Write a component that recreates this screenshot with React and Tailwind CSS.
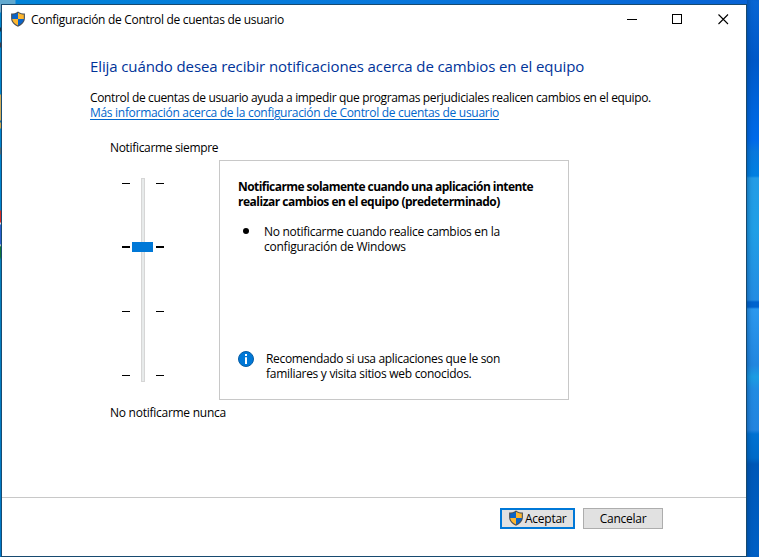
import React from 'react';

function Shield() {
  return (
    <svg width="16" height="16" viewBox="0 0 16 16" className="shrink-0">
      <path d="M8 .4C6 2 3.6 2.5 1.1 2.5v4.8C1.1 11 4 14 8 15.7c4-1.7 6.900-4.700 6.900-8.400V2.500C12.400 2.500 10 2 8 .4Z" fill="#4a4f55" />
      <path d="M8 1.800C6.300 3 4.300 3.500 2.200 3.600V8H8Z" fill="#0a64c8" />
      <path d="M8 1.800C9.700 3 11.700 3.500 13.800 3.600V8H8Z" fill="#fdb62f" />
      <path d="M2.200 8c.3 2.900 2.700 5.100 5.800 6.500V8Z" fill="#fdb62f" />
      <path d="M13.800 8c-.3 2.900-2.700 5.100-5.800 6.500V8Z" fill="#0a64c8" />
    </svg>
  );
}

function TitleBar() {
  return (
    <header className="flex h-[28px] items-center pl-2">
      <Shield />
      <h1 className="ml-[5px] tracking-[-0.3px]">Configuración de Control de cuentas de usuario</h1>
      <div className="ml-auto flex h-full">
        <button className="flex w-[45px] items-center justify-center pl-px" aria-label="Minimizar">
          <svg width="10" height="10" shapeRendering="crispEdges"><path d="M0 5h10v1H0Z" /></svg>
        </button>
        <button className="flex w-[46px] items-center justify-center" aria-label="Maximizar">
          <svg width="10" height="10" shapeRendering="crispEdges"><rect x=".5" y=".5" width="9" height="9" fill="none" stroke="#000" /></svg>
        </button>
        <button className="flex w-[46px] items-center justify-center" aria-label="Cerrar">
          <svg width="12" height="12"><path d="M1.500 1.500l9.500 9.500M11 1.500L1.500 11" stroke="#000" strokeWidth="1.100" /></svg>
        </button>
      </div>
    </header>
  );
}

const levels = [false, true, false, false];

function Ticks() {
  return (
    <div className="flex h-[193px] w-2 flex-col justify-between">
      {levels.map((active, i) => (
        <span key={i} className={active ? 'mt-[-1px] h-[2px] bg-black' : 'h-px bg-black'} />
      ))}
    </div>
  );
}

function Slider() {
  return (
    <div className="mt-[23px] ml-3 flex w-[42px] justify-between">
      <div className="pt-[5px]"><Ticks /></div>
      <div className="relative h-[204px] w-1 border border-[#d6d6d6] bg-[#e7eaea]">
        <div className="absolute top-[63px] left-[-10px] h-[10px] w-[21px] bg-[#0078d7]" />
      </div>
      <div className="pt-[5px]"><Ticks /></div>
    </div>
  );
}

function Panel() {
  return (
    <section className="flex h-[240px] w-[350px] flex-col border border-[#c8c8c8] px-[18px] pt-[18px]">
      <h3 className="font-bold whitespace-nowrap">
        <span className="block tracking-[-0.55px]">Notificarme solamente cuando una aplicación intente</span>
        <span className="block tracking-[-0.49px]">realizar cambios en el equipo (predeterminado)</span>
      </h3>
      <div className="mt-[15px] flex">
        <span className="mt-[4px] ml-[5px] size-[6px] rounded-full bg-black" />
        <p className="ml-[15px] whitespace-nowrap">
          <span className="block tracking-[-0.29px]">No notificarme cuando realice cambios en la</span>
          <span className="block tracking-[-0.24px]">configuración de Windows</span>
        </p>
      </div>
      <div className="mt-auto mb-[18px] flex">
        <svg width="16" height="16" viewBox="0 0 16 16">
          <circle cx="8" cy="8" r="7.500" fill="#0078d7" stroke="#075da5" />
          <path d="M7 3h2v2H7ZM7 6.200h2V13H7Z" fill="#fff" />
        </svg>
        <p className="ml-3 whitespace-nowrap">
          <span className="block tracking-[-0.33px]">Recomendado si usa aplicaciones que le son</span>
          <span className="block tracking-[-0.29px]">familiares y visita sitios web conocidos.</span>
        </p>
      </div>
    </section>
  );
}

export default function App() {
  return (
    <div className="flex h-[557px] w-[759px] overflow-hidden bg-[linear-gradient(90deg,#62a9cf_0_15px,#0083d8_16px,#0878dc_50%,#0862d4)] font-['Open_Sans','Noto_Sans',sans-serif] text-[12px] leading-[15px] text-black">
      <div className="mt-1 h-[553px] w-px bg-[linear-gradient(#75a6c5_0_8px,#0085ce_9px_23px,#17344a_24px_27px,#0085ce_28px_38px,#433c46_39px_43px,#0085ce_44px_90px,#d0ad5c_91px_116px,#17699c_117px_118px,#d0a74e_119px_124px,#0085d0_125px_143px,#506875_144px_150px,#0085d0_151px_206px,#d52d24_207px_218px,#ddd_219px_220px,#2c61cf_221px_240px,#ddd_241px,#107638_243px_253px,#0780bd_256px_270px,#0079c9)]" />
      <main className="mt-1 flex h-[553px] w-[746px] flex-col border border-[#174a70] bg-white">
        <TitleBar />
        <div className="flex-1 pt-[23px] pl-[88px]">
          <h2 className="text-[15px] leading-5 tracking-[-0.11px] whitespace-nowrap text-[#003399]">Elija cuándo desea recibir notificaciones acerca de cambios en el equipo</h2>
          <p className="mt-[14px] tracking-[-0.348px] whitespace-nowrap">Control de cuentas de usuario ayuda a impedir que programas perjudiciales realicen cambios en el equipo.</p>
          <a className="block w-fit tracking-[-0.3px] whitespace-nowrap text-[#0066cc] underline underline-offset-2">Más información acerca de la configuración de Control de cuentas de usuario</a>
          <div className="mt-5 flex pl-5">
            <div className="w-[109px] whitespace-nowrap">
              <p className="tracking-[-0.33px]">Notificarme siempre</p>
              <Slider />
              <p className="mt-[23px] tracking-[-0.26px]">No notificarme nunca</p>
            </div>
            <div className="pt-5"><Panel /></div>
          </div>
        </div>
        <footer className="flex h-[59px] gap-2 border-t border-[#c8c8c8] pt-[10px] pl-[498px]">
          <button className="flex h-[21px] w-[75px] items-center border-2 border-[#0078d7] bg-[#e1e1e1] pb-px pl-[6px] leading-[15px]">
            <Shield />
            <span className="mt-px ml-px tracking-[-0.26px]">Aceptar</span>
          </button>
          <button className="h-[21px] w-20 border border-[#adadad] bg-[#e1e1e1] leading-[15px] tracking-[-0.26px]">Cancelar</button>
        </footer>
      </main>
      <div className="h-[557px] flex-1 bg-[linear-gradient(#0866d4,#0058c8_60px,#0065dd_110px,#006aea_140px,#0878dd_152px,#0080e2_176px,#249ce6_178px,#209fe6_230px,#248ce2_300px,#0064cf_302px_307px,#2b98ee_309px,#2286df_365px,#1b9de3_377px,#218be2_390px,#2384df_430px,#0072d3_434px,#006ac8_458px,#0058b8_464px,#0060c5)] shadow-[inset_5px_0_5px_-4px_#00356b80]" />
    </div>
  );
}
